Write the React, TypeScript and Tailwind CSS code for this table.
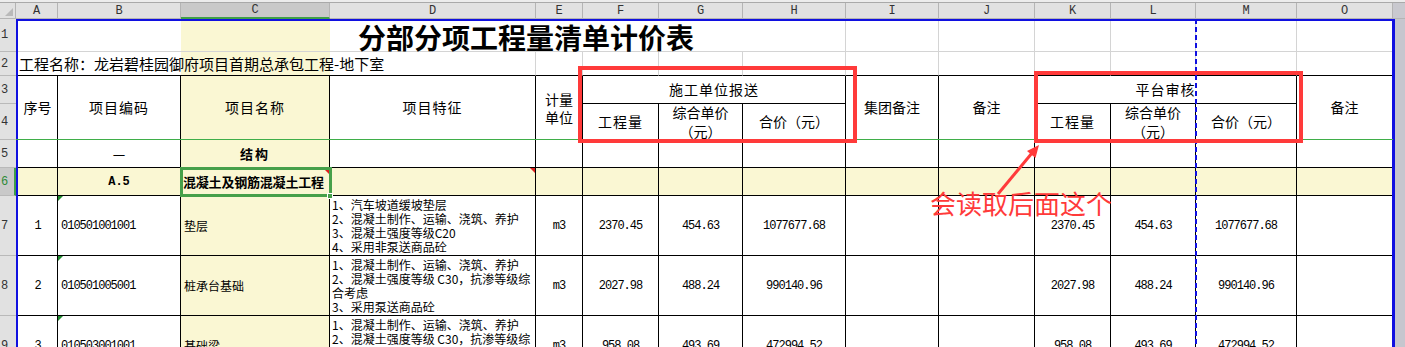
import React from 'react';

// Excel-like sheet: 分部分项工程量清单计价表

const SANS = "font-['Noto_Sans_CJK_SC',sans-serif]";
const MONO = "font-['Liberation_Mono','Noto_Sans_CJK_SC',monospace]";

const COL = [
  'col-start-1', 'col-start-2', 'col-start-3', 'col-start-4', 'col-start-5', 'col-start-6', 'col-start-7',
  'col-start-8', 'col-start-9', 'col-start-10', 'col-start-11', 'col-start-12', 'col-start-13', 'col-start-14',
];
const ROW = ['row-start-1', 'row-start-2', 'row-start-3', 'row-start-4', 'row-start-5', 'row-start-6', 'row-start-7', 'row-start-8', 'row-start-9'];

const HEAD_COLS = [
  { l: 'A', w: 'w-[42px]' },
  { l: 'B', w: 'w-[123px]' },
  { l: 'C', w: 'w-[149px]', active: true },
  { l: 'D', w: 'w-[206px]' },
  { l: 'E', w: 'w-[47px]' },
  { l: 'F', w: 'w-[76px]' },
  { l: 'G', w: 'w-[84px]' },
  { l: 'H', w: 'w-[103px]' },
  { l: 'I', w: 'w-[93px]' },
  { l: 'J', w: 'w-[96px]' },
  { l: 'K', w: 'w-[76px]' },
  { l: 'L', w: 'w-[85px]' },
  { l: 'M', w: 'w-[101px]' },
  { l: 'O', w: 'w-[96px]' },
];

const ROW_HEADS = [
  { n: '1', h: 'h-[33px]' },
  { n: '2', h: 'h-[24px]' },
  { n: '3', h: 'h-[28px]' },
  { n: '4', h: 'h-[36px]' },
  { n: '5', h: 'h-[28px]' },
  { n: '6', h: 'h-[28px]', active: true },
  { n: '7', h: 'h-[60px]' },
  { n: '8', h: 'h-[60px]' },
  { n: '9', h: 'h-[60px]' },
];

const ITEMS = [
  {
    no: '1', code: '010501001001', name: '垫层',
    feat: ['1、汽车坡道缓坡垫层', '2、混凝土制作、运输、浇筑、养护', '3、混凝土强度等级C20', '4、采用非泵送商品砼'],
    unit: 'm3', qty: '2370.45', price: '454.63', total: '1077677.68',
  },
  {
    no: '2', code: '010501005001', name: '桩承台基础',
    feat: ['1、混凝土制作、运输、浇筑、养护', '2、混凝土强度等级 C30，抗渗等级综', '合考虑', '3、采用泵送商品砼'],
    unit: 'm3', qty: '2027.98', price: '488.24', total: '990140.96',
  },
  {
    no: '3', code: '010503001001', name: '基础梁',
    feat: ['1、混凝土制作、运输、浇筑、养护', '2、混凝土强度等级 C30，抗渗等级综', '合考虑', '3、采用泵送商品砼'],
    unit: 'm3', qty: '958.08', price: '493.69', total: '472994.52',
  },
];

const BLK = 'border-r border-b border-black';
const BLK_LAST = 'border-b border-black';
const GRAY = 'border-r border-b border-[#d4d4d4]';
const GRAY_LAST = 'border-b border-[#d4d4d4]';

const GreenTick = () => (
  <span className="absolute left-0 top-0 w-0 h-0 border-t-[5px] border-r-[5px] border-t-[#1e8a2e] border-r-transparent" />
);

const App: React.FC = () => {
  const cells: React.ReactNode[] = [];

  // row 1 & 2 (grey grid lines)
  for (let c = 8; c < 14; c++) {
    cells.push(<div key={`r1-${c}`} className={`${COL[c]} row-start-1 ${c === 13 ? GRAY_LAST : GRAY}`} />);
  }
  for (let c = 4; c < 14; c++) {
    cells.push(
      <div
        key={`r2-${c}`}
        className={`${COL[c]} row-start-2 border-b border-b-black ${c === 13 ? '' : 'border-r border-r-[#d4d4d4]'}`}
      />
    );
  }

  // rows 5, 6
  for (let r = 4; r < 6; r++) {
    for (let c = 0; c < 14; c++) {
      let content: React.ReactNode = null;
      let cls = 'justify-center';
      if (r === 4 && c === 1) content = <span className={`${SANS} text-[14px]`}>—</span>;
      if (r === 4 && c === 2) content = <span className={`${SANS} text-[13px] font-bold tracking-[2px]`}>结构</span>;
      if (r === 5 && c === 1) content = <span className={`${MONO} text-[12px] font-bold`}>A.5</span>;
      if (r === 5 && c === 2) {
        content = <span className={`${SANS} text-[13px] font-bold tracking-[-0.2px]`}>混凝土及钢筋混凝土工程</span>;
        cls = 'justify-start pl-[2px]';
      }
      cells.push(
        <div key={`r${r}-${c}`} className={`${COL[c]} ${ROW[r]} ${c === 13 ? BLK_LAST : BLK} relative flex items-center ${cls}`}>
          {content}
          {r === 5 && c === 3 && (
            <span className="absolute right-0 top-0 w-0 h-0 border-t-[5px] border-l-[5px] border-t-[#e02020] border-l-transparent" />
          )}
        </div>
      );
    }
  }

  // item rows
  ITEMS.forEach((it, i) => {
    const r = 6 + i;
    const vals: React.ReactNode[] = [
      it.no, it.code, it.name, null, it.unit, it.qty, it.price, it.total, '', '', it.qty, it.price, it.total, '',
    ];
    vals.forEach((v, c) => {
      const border = c === 13 ? BLK_LAST : BLK;
      if (c === 3) {
        cells.push(
          <div key={`r${r}-${c}`} className={`${COL[c]} ${ROW[r]} ${border} flex flex-col justify-center pl-[2px] ${SANS} text-[12px] leading-[14px]`}>
            {it.feat.map((f) => (
              <div key={f + c} className="whitespace-nowrap">{f}</div>
            ))}
          </div>
        );
        return;
      }
      const isLeft = c === 1 || c === 2;
      const font = c === 2 ? `${SANS} text-[12px]` : `${MONO} text-[12px] tracking-[-1px]`;
      cells.push(
        <div
          key={`r${r}-${c}`}
          className={`${COL[c]} ${ROW[r]} ${border} relative flex items-center ${isLeft ? 'justify-start pl-[3px]' : 'justify-center'} ${font} whitespace-nowrap`}
        >
          {c === 1 && <GreenTick />}
          {v}
        </div>
      );
    });
  });

  return (
    <div className={`relative w-[1405px] h-[347px] overflow-hidden bg-white text-black ${SANS}`}>
      {/* top strip */}
      <div className="h-[3px] bg-[#ececec] border-b border-[#a9a9a9]" />

      {/* column header */}
      <div className="flex h-[16px]">
        <div className="relative w-[16px] bg-[#e1e1e1] border-r border-b border-[#b4b4b4]">
          <span className="absolute right-[2px] bottom-[2px] w-0 h-0 border-b-[8px] border-l-[8px] border-b-[#b9b9b9] border-l-transparent" />
        </div>
        {HEAD_COLS.map((h) => (
          <div
            key={h.l}
            className={`${h.w} flex items-center justify-center ${MONO} text-[12px] text-[#333] border-r border-[#b4b4b4] ${
              h.active ? 'bg-[#c9c9c9] border-b-2 border-b-[#3f9f47]' : 'bg-[#e1e1e1] border-b border-b-[#b4b4b4]'
            }`}
          >
            {h.l}
          </div>
        ))}
        <div className="flex-1 bg-[#c9c9cf] border-b border-[#b4b4b4]" />
      </div>

      {/* body */}
      <div className="flex">
        <div className="w-[16px] flex flex-col">
          {ROW_HEADS.map((r) => (
            <div
              key={r.n}
              className={`${r.h} shrink-0 flex items-center pl-[1px] ${MONO} text-[12px] border-b border-[#b9b9b9] ${
                r.active ? 'bg-[#c9c9c9] text-[#2d8a36] border-r-2 border-r-[#3f9f47]' : 'bg-[#e1e1e1] text-[#333]'
              }`}
            >
              {r.n}
            </div>
          ))}
        </div>

        <div className="grid grid-cols-[40px_123px_149px_206px_47px_76px_84px_103px_93px_96px_76px_85px_101px_95px] grid-rows-[31px_24px_28px_36px_28px_28px_60px_60px_60px] border-t-2 border-l-2 border-[#1010e0]">
          {/* highlights */}
          <div className="col-start-3 row-start-1 row-span-9 bg-[#faf7d3]" />
          <div className="col-start-1 col-span-14 row-start-6 bg-[#faf7d3]" />

          {/* row 1 title */}
          <div className={`col-start-1 col-span-8 row-start-1 ${GRAY} flex items-center pl-[340px] pt-[2px]`}>
            <span className="text-[28px] leading-none font-bold whitespace-nowrap">分部分项工程量清单计价表</span>
          </div>

          {/* row 2 */}
          <div className="col-start-1 col-span-4 row-start-2 border-r border-r-[#d4d4d4] border-b border-b-black flex items-center pl-[1px]">
            <span className="text-[15px] leading-none whitespace-nowrap">工程名称：龙岩碧桂园御府项目首期总承包工程-地下室</span>
          </div>

          {/* header rows 3-4 */}
          <div className={`col-start-1 row-start-3 row-span-2 ${BLK} flex items-center justify-center text-[14px]`}>序号</div>
          <div className={`col-start-2 row-start-3 row-span-2 ${BLK} flex items-center justify-center text-[14px] tracking-[1px]`}>项目编码</div>
          <div className={`col-start-3 row-start-3 row-span-2 ${BLK} flex items-center justify-center text-[14px] tracking-[1px]`}>项目名称</div>
          <div className={`col-start-4 row-start-3 row-span-2 ${BLK} flex items-center justify-center text-[14px] tracking-[1px]`}>项目特征</div>
          <div className={`col-start-5 row-start-3 row-span-2 ${BLK} flex flex-col items-center justify-center text-[14px] leading-[18px]`}>
            <div>计量</div>
            <div>单位</div>
          </div>
          <div className={`col-start-6 col-span-3 row-start-3 ${BLK} flex items-center justify-center text-[14px] tracking-[1px]`}>施工单位报送</div>
          <div className={`col-start-6 row-start-4 ${BLK} flex items-center justify-center text-[14px] tracking-[1px]`}>工程量</div>
          <div className={`col-start-7 row-start-4 ${BLK} flex flex-col items-center justify-center text-[14px] leading-[19px]`}>
            <div>综合单价</div>
            <div>（元）</div>
          </div>
          <div className={`col-start-8 row-start-4 ${BLK} flex items-center justify-center text-[14px]`}>合价（元）</div>
          <div className={`col-start-9 row-start-3 row-span-2 ${BLK} flex items-center justify-center text-[14px]`}>集团备注</div>
          <div className={`col-start-10 row-start-3 row-span-2 ${BLK} flex items-center justify-center text-[14px]`}>备注</div>
          <div className={`col-start-11 col-span-3 row-start-3 ${BLK} flex items-center justify-center text-[14px] tracking-[1px]`}>平台审核</div>
          <div className={`col-start-11 row-start-4 ${BLK} flex items-center justify-center text-[14px] tracking-[1px]`}>工程量</div>
          <div className={`col-start-12 row-start-4 ${BLK} flex flex-col items-center justify-center text-[14px] leading-[19px]`}>
            <div>综合单价</div>
            <div>（元）</div>
          </div>
          <div className={`col-start-13 row-start-4 ${BLK} flex items-center justify-center text-[14px]`}>合价（元）</div>
          <div className={`col-start-14 row-start-3 row-span-2 ${BLK_LAST} flex items-center justify-center text-[14px]`}>备注</div>

          {cells}
        </div>

        <div className="flex-1 h-[330px] bg-[#c6c6ce] border-l-[3px] border-[#1010e0]" />
      </div>

      {/* freeze pane line */}
      <div className="absolute left-[16px] top-[139px] w-[1377px] h-px bg-[#3fae49]" />

      {/* page break */}
      <svg className="absolute left-[1194px] top-[19px]" width="4" height="330">
        <line x1="2" y1="0" x2="2" y2="330" stroke="#1010e0" strokeWidth="2" strokeDasharray="5 3" />
      </svg>

      {/* active cell */}
      <div className="absolute left-[180px] top-[167px] w-[152px] h-[30px] border-[3px] border-[#46a04a]" />
      <span className="absolute left-[325px] top-[170px] w-0 h-0 border-t-[4px] border-l-[4px] border-t-[#e02020] border-l-transparent" />
      <div className="absolute left-[327px] top-[193px] w-[6px] h-[6px] bg-[#46a04a] border border-white" />

      {/* annotations */}
      <div className="absolute left-[578px] top-[66px] w-[279px] h-[77px] border-4 border-[#ff3a3a]" />
      <div className="absolute left-[1034px] top-[71px] w-[269px] h-[72px] border-4 border-[#ff3a3a]" />
      <svg className="absolute left-[990px] top-[140px]" width="60" height="60">
        <line x1="8" y1="54" x2="42" y2="13" stroke="#ff3a3a" strokeWidth="3" />
        <polygon points="49,5 45.5,18 37,11" fill="#ff3a3a" />
      </svg>
      <div className="absolute left-[930px] top-[188px] text-[26px] leading-[30px] text-[#ff3a3a] whitespace-nowrap">会读取后面这个</div>
    </div>
  );
};

export default App;
